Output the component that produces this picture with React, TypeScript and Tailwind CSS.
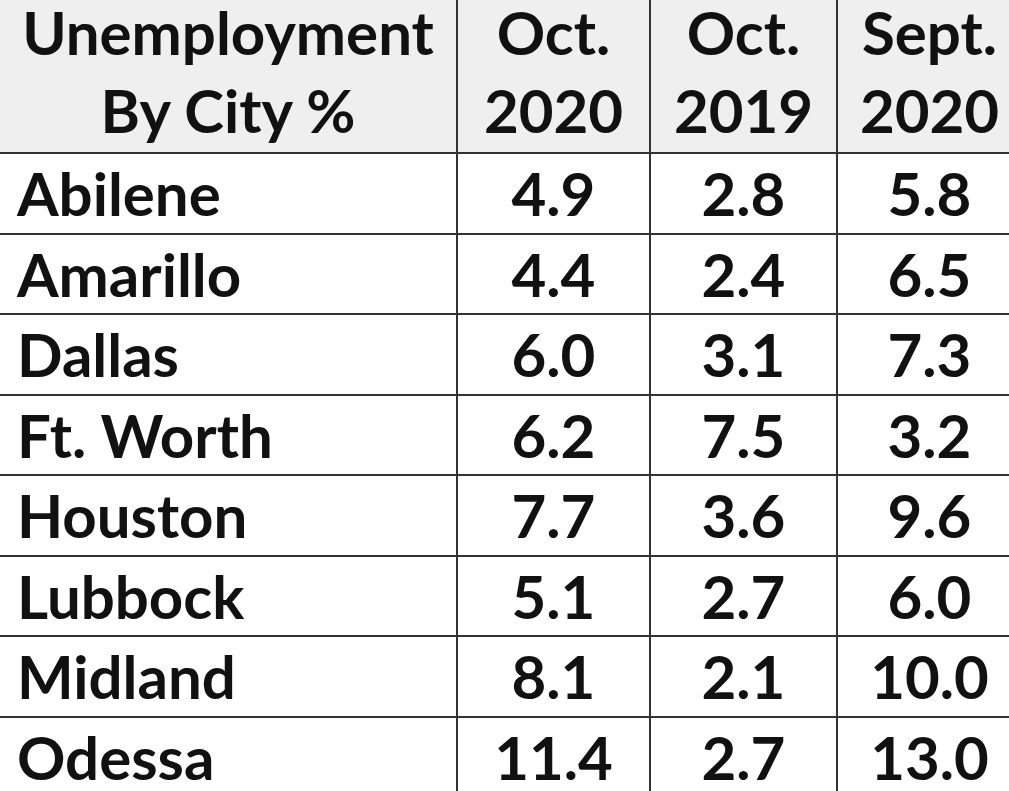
import React from "react";

const rows: [string, string, string, string][] = [
  ["Abilene", "4.9", "2.8", "5.8"],
  ["Amarillo", "4.4", "2.4", "6.5"],
  ["Dallas", "6.0", "3.1", "7.3"],
  ["Ft. Worth", "6.2", "7.5", "3.2"],
  ["Houston", "7.7", "3.6", "9.6"],
  ["Lubbock", "5.1", "2.7", "6.0"],
  ["Midland", "8.1", "2.1", "10.0"],
  ["Odessa", "11.4", "2.7", "13.0"],
];

function Head({ a, b, last }: { a: string; b: string; last?: boolean }) {
  return (
    <div
      className={
        last
          ? "h-[154px] bg-[#efefef] border-b-2 border-[#333] flex flex-col items-center gap-[14px] leading-[64px] text-center"
          : "h-[154px] bg-[#efefef] border-b-2 border-r-2 border-[#333] flex flex-col items-center gap-[14px] leading-[64px] text-center"
      }
    >
      <div>{a}</div>
      <div>{b}</div>
    </div>
  );
}

export default function App() {
  return (
    <div
      className="w-[1009px] h-[791px] overflow-hidden bg-white text-[#111] font-bold"
      style={{ fontFamily: "Lato, 'Open Sans', sans-serif" }}
    >
      <div className="grid grid-cols-[458px_193px_187px_183px] w-[1021px] text-[60px]">
        <Head a="Unemployment" b="By City %" />
        <Head a="Oct." b="2020" />
        <Head a="Oct." b="2019" />
        <Head a="Sept." b="2020" last />
        {rows.map((r) => (
          <React.Fragment key={r[0]}>
            <div className="h-[80.5px] border-b-2 border-r-2 border-[#333] flex items-center pl-[17px] leading-[78px]">
              {r[0]}
            </div>
            <div className="h-[80.5px] border-b-2 border-r-2 border-[#333] flex items-center justify-center leading-[78px]">
              {r[1]}
            </div>
            <div className="h-[80.5px] border-b-2 border-r-2 border-[#333] flex items-center justify-center leading-[78px]">
              {r[2]}
            </div>
            <div className="h-[80.5px] border-b-2 border-[#333] flex items-center justify-center leading-[78px]">
              {r[3]}
            </div>
          </React.Fragment>
        ))}
      </div>
    </div>
  );
}
